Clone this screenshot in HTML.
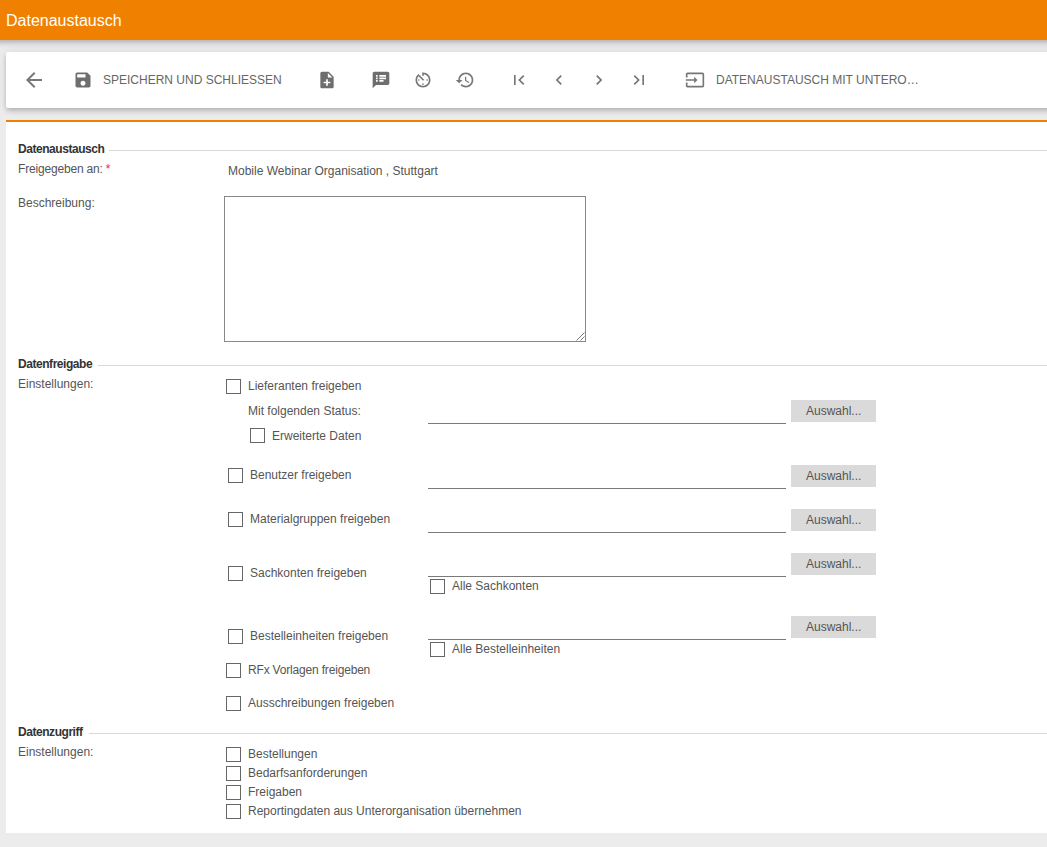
<!DOCTYPE html>
<html><head><meta charset="utf-8">
<style>
html,body{margin:0;padding:0;}
body{width:1047px;height:847px;overflow:hidden;background:#ececec;font-family:"Liberation Sans",sans-serif;position:relative;}
#hdr{position:absolute;left:-20px;top:0;width:1090px;height:40px;background:#f08000;box-shadow:0 2px 4px -1px rgba(0,0,0,.13),0 4px 5px 0 rgba(0,0,0,.09),0 1px 10px 0 rgba(0,0,0,.10);z-index:2;}
#hdr .t{position:absolute;left:26px;top:13px;font-size:16px;line-height:16px;color:#fff;}
#tb{position:absolute;left:6px;top:52px;width:1060px;height:56px;background:#fff;border-radius:2px;box-shadow:0 2px 4px -1px rgba(0,0,0,.13),0 4px 5px 0 rgba(0,0,0,.09),0 1px 10px 0 rgba(0,0,0,.10);}
.ic{position:absolute;fill:#6e6e6e;}
.tbt{position:absolute;font-size:12px;line-height:12px;color:#666;white-space:nowrap;}
#orl{position:absolute;left:6px;top:120px;width:1041px;height:2px;background:#f08000;}
#pnl{position:absolute;left:6px;top:122px;width:1041px;height:711px;background:#fff;}
.h{position:absolute;font-size:12px;line-height:12px;font-weight:bold;color:#333;white-space:nowrap;letter-spacing:-0.45px;}
.hl{position:absolute;height:1px;background:#d8d8d8;right:0;}
.l{position:absolute;font-size:12px;line-height:12px;color:#555;white-space:nowrap;}
.ast{position:absolute;font-size:13px;line-height:13px;color:#f03a3a;}
.cb{position:absolute;width:13px;height:13px;border:1px solid #666;background:#fff;}
.in{position:absolute;left:428px;width:358px;height:1px;background:#7a7a7a;}
.btn{position:absolute;left:791px;width:85px;height:22px;background:#dadada;}
.btn span{position:absolute;left:15px;top:5px;font-size:12px;line-height:12px;color:#555;white-space:nowrap;}
.ta{position:absolute;left:224px;top:196px;width:360px;height:144px;border:1px solid #888;background:#fff;}
</style></head><body>
<div id="hdr"><div class="t">Datenaustausch</div></div>
<div id="tb"></div>
<svg class="ic" style="left:22px;top:68px;fill:#777" width="24" height="24" viewBox="0 0 24 24"><path d="M20 11H7.83l5.59-5.59L12 4l-8 8 8 8 1.41-1.41L7.83 13H20v-2z"/></svg>
<svg class="ic" style="left:73px;top:70px;" width="20" height="20" viewBox="0 0 24 24"><path d="M17 3H5c-1.11 0-2 .9-2 2v14c0 1.1.89 2 2 2h14c1.1 0 2-.9 2-2V7l-4-4zm-5 16c-1.66 0-3-1.34-3-3s1.34-3 3-3 3 1.34 3 3-1.34 3-3 3zm3-10H5V5h10v4z"/></svg>
<div class="tbt" style="left:103px;top:74px">SPEICHERN UND SCHLIESSEN</div>
<svg class="ic" style="left:317px;top:70px;" width="20" height="20" viewBox="0 0 24 24"><path d="M14 2H6c-1.1 0-1.99.9-1.99 2L4 20c0 1.1.89 2 1.99 2H18c1.1 0 2-.9 2-2V8l-6-6zm2 14h-3v3h-2v-3H8v-2h3v-3h2v3h3v2zm-3-7V3.5L18.5 9H13z"/></svg>
<svg class="ic" style="left:371px;top:70px;" width="20" height="20" viewBox="0 0 24 24"><path d="M20 2H4c-1.1 0-1.99.9-1.99 2L2 22l4-4h14c1.1 0 2-.9 2-2V4c0-1.1-.9-2-2-2zM8 14H6v-2h2v2zm0-3H6V9h2v2zm0-3H6V6h2v2zm7 6h-5v-2h5v2zm3-3h-8V9h8v2zm0-3h-8V6h8v2z"/></svg>
<svg class="ic" style="left:413px;top:70px;fill:#777" width="20" height="20" viewBox="0 0 24 24"><path d="M11 17c0 .55.45 1 1 1s1-.45 1-1-.45-1-1-1-1 .45-1 1zm0-14v4h2V5.08c3.39.49 6 3.39 6 6.92 0 3.87-3.13 7-7 7s-7-3.13-7-7c0-1.68.59-3.22 1.58-4.5L12 13l1.41-1.41-6.8-6.8v.02C4.42 6.45 3 9.05 3 12c0 4.97 4.02 9 9 9 4.97 0 9-4.03 9-9s-4.03-9-9-9h-1zm7 9c0-.55-.45-1-1-1s-1 .45-1 1 .45 1 1 1 1-.45 1-1zM6 12c0 .55.45 1 1 1s1-.45 1-1-.45-1-1-1-1 .45-1 1z"/></svg>
<svg class="ic" style="left:455px;top:70px;fill:#777" width="20" height="20" viewBox="0 0 24 24"><path d="M13 3c-4.97 0-9 4.03-9 9H1l3.89 3.89.07.14L9 12H6c0-3.87 3.13-7 7-7s7 3.13 7 7-3.13 7-7 7c-1.93 0-3.68-.79-4.94-2.06l-1.42 1.42C8.27 19.99 10.51 21 13 21c4.97 0 9-4.03 9-9s-4.03-9-9-9zm-1 5v5l4.28 2.54.72-1.21-3.5-2.08V8H12z"/></svg>
<svg class="ic" style="left:509px;top:70px;fill:#777" width="20" height="20" viewBox="0 0 24 24"><path d="M18.41 16.59L13.82 12l4.59-4.59L17 6l-6 6 6 6zM6 6h2v12H6z"/></svg>
<svg class="ic" style="left:549px;top:70px;fill:#777" width="20" height="20" viewBox="0 0 24 24"><path d="M15.41 7.41L14 6l-6 6 6 6 1.41-1.41L10.83 12z"/></svg>
<svg class="ic" style="left:589px;top:70px;fill:#777" width="20" height="20" viewBox="0 0 24 24"><path d="M10 6L8.59 7.41 13.17 12l-4.58 4.59L10 18l6-6z"/></svg>
<svg class="ic" style="left:629px;top:70px;fill:#777" width="20" height="20" viewBox="0 0 24 24"><path d="M5.59 7.41L10.18 12l-4.59 4.59L7 18l6-6-6-6zM16 6h2v12h-2z"/></svg>
<svg class="ic" style="left:685px;top:70px;fill:#777" width="20" height="20" viewBox="0 0 24 24"><path d="M21 3.01H3c-1.1 0-2 .9-2 2V9h2V4.99h18v14.03H3V15H1v4.01c0 1.1.9 1.98 2 1.98h18c1.1 0 2-.88 2-1.98v-14c0-1.11-.9-2-2-2zM11 16l4-4-4-4v3H1v2h10v3z"/></svg>
<div class="tbt" style="left:716px;top:74px">DATENAUSTAUSCH MIT UNTERO…</div>
<div id="orl"></div>
<div id="pnl"></div>
<div class="h" style="left:18px;top:143px">Datenaustausch</div><div class="hl" style="left:109px;top:150px"></div>
<div class="l" style="left:18px;top:163px;letter-spacing:-0.18px">Freigegeben an:</div>
<div class="ast" style="left:105.5px;top:162px">*</div>
<div class="l" style="left:228px;top:165px;">Mobile Webinar Organisation , Stuttgart</div>
<div class="l" style="left:18px;top:197px;">Beschreibung:</div>
<div class="ta"><svg width="10" height="10" style="position:absolute;right:0px;bottom:0px"><path d="M9.5 1.5L1.5 9.5M9.5 5.5L5.5 9.5" stroke="#777" stroke-width="1"/></svg></div>
<div class="h" style="left:18px;top:358px">Datenfreigabe</div><div class="hl" style="left:98px;top:365px"></div>
<div class="l" style="left:18px;top:378px;">Einstellungen:</div>
<div class="cb" style="left:226px;top:379px"></div>
<div class="l" style="left:248px;top:380px;">Lieferanten freigeben</div>
<div class="l" style="left:248px;top:405px;">Mit folgenden Status:</div>
<div class="in" style="top:423px"></div>
<div class="btn" style="top:400px"><span>Auswahl...</span></div>
<div class="cb" style="left:250px;top:428px"></div>
<div class="l" style="left:272px;top:430px;">Erweiterte Daten</div>
<div class="cb" style="left:228px;top:468px"></div>
<div class="l" style="left:250px;top:469px;">Benutzer freigeben</div>
<div class="in" style="top:488px"></div>
<div class="btn" style="top:465px"><span>Auswahl...</span></div>
<div class="cb" style="left:228px;top:512px"></div>
<div class="l" style="left:250px;top:513px;">Materialgruppen freigeben</div>
<div class="in" style="top:532px"></div>
<div class="btn" style="top:509px"><span>Auswahl...</span></div>
<div class="cb" style="left:228px;top:566px"></div>
<div class="l" style="left:250px;top:567px;">Sachkonten freigeben</div>
<div class="in" style="top:576px"></div>
<div class="btn" style="top:553px"><span>Auswahl...</span></div>
<div class="cb" style="left:430px;top:579px"></div>
<div class="l" style="left:452px;top:580px;">Alle Sachkonten</div>
<div class="cb" style="left:228px;top:629px"></div>
<div class="l" style="left:250px;top:630px;">Bestelleinheiten freigeben</div>
<div class="in" style="top:639px"></div>
<div class="btn" style="top:616px"><span>Auswahl...</span></div>
<div class="cb" style="left:430px;top:642px"></div>
<div class="l" style="left:452px;top:643px;">Alle Bestelleinheiten</div>
<div class="cb" style="left:226px;top:663px"></div>
<div class="l" style="left:248px;top:664px;letter-spacing:-0.18px">RFx Vorlagen freigeben</div>
<div class="cb" style="left:226px;top:696px"></div>
<div class="l" style="left:248px;top:697px;">Ausschreibungen freigeben</div>
<div class="h" style="left:18px;top:726px">Datenzugriff</div><div class="hl" style="left:89px;top:733px"></div>
<div class="l" style="left:18px;top:746px;">Einstellungen:</div>
<div class="cb" style="left:226px;top:747px"></div>
<div class="l" style="left:248px;top:748px;">Bestellungen</div>
<div class="cb" style="left:226px;top:766px"></div>
<div class="l" style="left:248px;top:767px;">Bedarfsanforderungen</div>
<div class="cb" style="left:226px;top:785px"></div>
<div class="l" style="left:248px;top:786px;">Freigaben</div>
<div class="cb" style="left:226px;top:804px"></div>
<div class="l" style="left:248px;top:805px;">Reportingdaten aus Unterorganisation übernehmen</div>
</body></html>
